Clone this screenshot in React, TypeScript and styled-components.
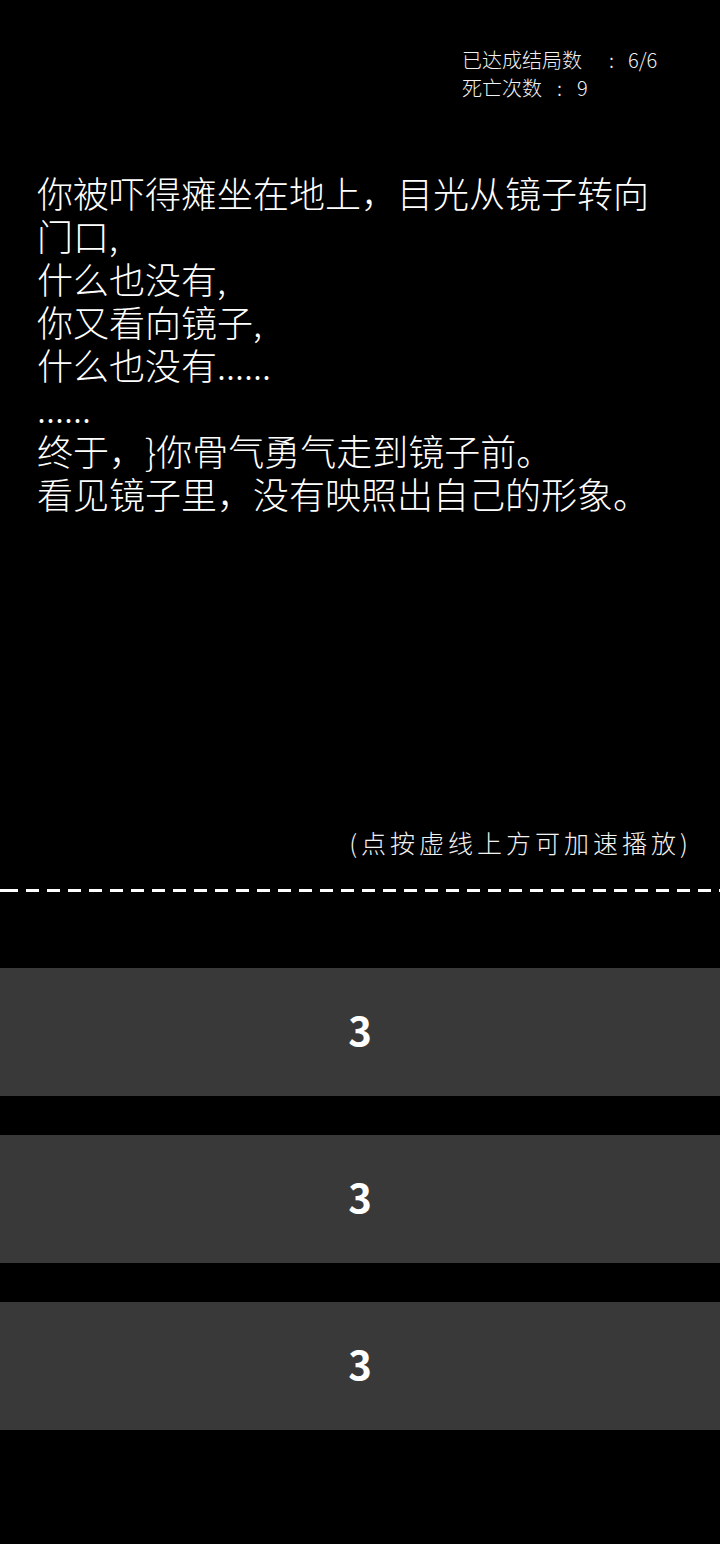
import React from 'react';
import styled, { createGlobalStyle } from 'styled-components';

const GlobalStyle = createGlobalStyle`
  html, body {
    margin: 0;
    padding: 0;
    background: #000;
  }
  body {
    font-family: "Noto Sans CJK SC", "Noto Sans", sans-serif;
    color: #fff;
    text-spacing-trim: space-all;
  }
`;

const Screen = styled.div`
  width: 720px;
  min-height: 1544px;
  background: #000;
  display: flex;
  flex-direction: column;
`;

const StatsBar = styled.div`
  display: flex;
  justify-content: flex-end;
  padding: 46px 58px 0 0;
`;

const Stats = styled.div`
  font-size: 20px;
  line-height: 28px;
  font-weight: 300;
  color: #f2f2f2;
  width: 200px;
`;

const Colon = styled.span<{ $before: number; $after: number }>`
  margin-left: ${(p) => p.$before}px;
  margin-right: ${(p) => p.$after}px;
`;

const Story = styled.div`
  margin-top: 69px;
  height: 654px;
  padding: 0 37px;
  font-size: 36px;
  line-height: 43px;
  font-weight: 300;
  color: #fff;
`;

const Line = styled.div``;

const Hint = styled.div`
  text-align: right;
  padding-right: 28px;
  font-size: 25px;
  line-height: 34px;
  letter-spacing: 4px;
  font-weight: 300;
  color: #f2f2f2;
`;

const DashedRule = styled.div`
  margin-top: 30px;
  height: 3px;
  background-image: repeating-linear-gradient(
    to right,
    #fff 0,
    #fff 13px,
    transparent 13px,
    transparent 21px
  );
  background-position: 5px 0;
`;

const Choices = styled.div`
  margin-top: 76px;
  display: flex;
  flex-direction: column;
  gap: 39px;
`;

const ChoiceButton = styled.button`
  height: 128px;
  border: none;
  background: #393939;
  color: #fff;
  font-family: "Noto Sans CJK SC", "Noto Sans", sans-serif;
  font-size: 40px;
  font-weight: 700;
  padding: 0 0 6px;
  cursor: pointer;
`;

const storyLines = [
  '你被吓得瘫坐在地上，目光从镜子转向门口,',
  '什么也没有,',
  '你又看向镜子,',
  '什么也没有......',
  '......',
  '终于，}你骨气勇气走到镜子前。',
  '看见镜子里，没有映照出自己的形象。',
];

const choices = ['3', '3', '3'];

const App: React.FC = () => {
  return (
    <>
      <GlobalStyle />
      <Screen>
        <StatsBar>
          <Stats>
            <div>
              已达成结局数<Colon $before={27} $after={14}>:</Colon>6/6
            </div>
            <div>
              死亡次数<Colon $before={15} $after={15}>:</Colon>9
            </div>
          </Stats>
        </StatsBar>
        <Story>
          {storyLines.map((text, i) => (
            <Line key={i}>{text}</Line>
          ))}
        </Story>
        <Hint>(点按虚线上方可加速播放)</Hint>
        <DashedRule />
        <Choices>
          {choices.map((label, i) => (
            <ChoiceButton key={i}>{label}</ChoiceButton>
          ))}
        </Choices>
      </Screen>
    </>
  );
};

export default App;
